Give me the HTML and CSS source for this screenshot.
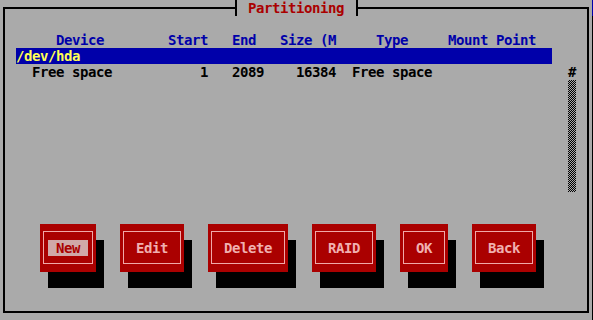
FILE: index.html
```html
<!DOCTYPE html>
<html lang="en">
<head>
  <meta charset="UTF-8" />
  <title>Partitioning</title>
  <link rel="stylesheet" href="styles.css">
</head>
<body>
  <div class="window">
    <div class="frame">
      <div class="title">Partitioning</div>

      <div class="listbox">
        <div class="list">
          <div class="row head">     Device        Start   End   Size (M     Type     Mount Point</div>
          <div class="row current">/dev/hda</div>
          <div class="row">  Free space           1   2089    16384  Free space</div>
        </div>
        <div class="scrollbar">
          <div class="thumb">#</div>
          <div class="track"></div>
        </div>
      </div>

      <div class="buttons">
        <div class="btn focus"><span class="face"><span class="label">New</span></span></div>
        <div class="btn"><span class="face"><span class="label">Edit</span></span></div>
        <div class="btn"><span class="face"><span class="label">Delete</span></span></div>
        <div class="btn"><span class="face"><span class="label">RAID</span></span></div>
        <div class="btn"><span class="face"><span class="label">OK</span></span></div>
        <div class="btn"><span class="face"><span class="label">Back</span></span></div>
      </div>
    </div>
  </div>
</body>
</html>
```

FILE: styles.css
```css
/* Text-mode installer screen, 8x16 character cells */
body {
  margin: 0;
  width: 593px;
  height: 320px;
  overflow: hidden;
  background: #0000aa;
  font-family: "DejaVu Sans Mono", monospace;
  font-weight: bold;
  font-size: 14px;
  letter-spacing: -0.43px;
  line-height: 16px;
  color: #000;
}
.window {
  width: 592px;
  height: 336px;
  background: #aaaaaa;
  box-shadow: 8px 16px 0 #000;
  overflow: hidden;
}
.frame {
  box-sizing: border-box;
  margin: 7px 0 0 3px;
  width: 586px;
  height: 306px;
  border: 2px solid #000;
}
.title {
  width: fit-content;
  height: 16px;
  margin: -9px 0 0 230px;
  padding: 0 12px 0 11px;
  background: #aaaaaa;
  border-left: 2px solid #000;
  border-right: 2px solid #000;
  color: #aa0000;
}
.listbox {
  display: flex;
  gap: 16px;
  margin-top: 16px;
  padding-left: 11px;
}
.list {
  width: 536px;
}
.row {
  height: 16px;
  white-space: pre;
}
.head {
  color: #0000aa;
}
.current {
  background: #0000aa;
  color: #ffff55;
}
.scrollbar {
  width: 8px;
  margin-top: 32px;
}
.thumb {
  height: 16px;
}
.track {
  height: 112px;
  background: repeating-conic-gradient(#000 0 25%, #aaaaaa 0 50%) 0 0 / 2px 2px;
}
.buttons {
  display: flex;
  gap: 24px;
  margin-top: 32px;
  padding-left: 35px;
}
.btn {
  padding: 7px 3px 8px;
  background: #aa0000;
  box-shadow: 8px 16px 0 #000;
}
.face {
  display: flex;
  justify-content: center;
  padding: 8px 4px 7px;
  border: 1px solid #f0a8a8;
}
.label {
  padding: 0 8px;
  color: #f0b0b0;
  white-space: pre;
}
.focus .label {
  background: #d0a8a8;
  color: #aa0000;
}
```
